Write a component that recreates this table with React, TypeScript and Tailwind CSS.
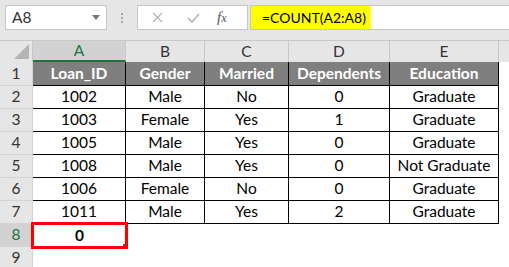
import React from "react";

type Loan = { id: string; gender: string; married: string; deps: string; edu: string };

const loans: Loan[] = [
  { id: "1002", gender: "Male", married: "No", deps: "0", edu: "Graduate" },
  { id: "1003", gender: "Female", married: "Yes", deps: "1", edu: "Graduate" },
  { id: "1005", gender: "Male", married: "Yes", deps: "0", edu: "Graduate" },
  { id: "1008", gender: "Male", married: "Yes", deps: "0", edu: "Not Graduate" },
  { id: "1006", gender: "Female", married: "No", deps: "0", edu: "Graduate" },
  { id: "1011", gender: "Male", married: "Yes", deps: "2", edu: "Graduate" },
];

const widths = ["w-[93px]", "w-[79px]", "w-[84px]", "w-[101px]", "w-[109px]"];
const letters = ["A", "B", "C", "D", "E"];

function RowNum({ n, active, h }: { n: number; active?: boolean; h: string }) {
  return (
    <div
      className={`${h} w-[33px] shrink-0 flex items-center justify-center border-r border-b border-[#d4d4d4] ${
        active ? "bg-[#d2d2d2] text-[#217346]" : "bg-[#e6e6e6] text-[#333]"
      }`}
    >
      {n}
    </div>
  );
}

export default function App() {
  return (
    <div className="w-[509px] h-[267px] overflow-hidden bg-white text-[15.5px] text-black" style={{ fontFamily: "Lato, 'Liberation Sans', sans-serif" }}>
      {/* formula bar */}
      <div className="h-[40px] bg-[#e6e6e6] flex items-start pt-[5px] pl-[5px]">
        <div className="w-[102px] h-[25px] bg-white border border-[#c6c6c6] flex items-center pl-[6px] pr-[6px] text-[#333]">
          <span className="flex-1">A8</span>
          <svg width="8" height="5" viewBox="0 0 8 5"><path d="M0 0h8L4 5z" fill="#777" /></svg>
        </div>
        <div className="w-[30px] h-[25px] flex flex-col items-center justify-center gap-[2px]">
          <span className="w-[2px] h-[2px] bg-[#a6a6a6]" />
          <span className="w-[2px] h-[2px] bg-[#a6a6a6]" />
          <span className="w-[2px] h-[2px] bg-[#a6a6a6]" />
        </div>
        <div className="w-[111px] h-[25px] bg-white border border-[#c6c6c6] flex items-center">
          <svg className="ml-[14px]" width="11" height="11" viewBox="0 0 11 11">
            <path d="M1 1l9 9M10 1l-9 9" stroke="#b5b5b5" strokeWidth="1.3" />
          </svg>
          <svg className="ml-[24px]" width="13" height="10" viewBox="0 0 13 10">
            <path d="M1 5l4 4 7-8" stroke="#b5b5b5" strokeWidth="1.6" fill="none" />
          </svg>
          <span className="ml-[17px] text-[#555] italic text-[15px]" style={{ fontFamily: "'Liberation Serif', serif" }}>
            f<span className="text-[12px]">x</span>
          </span>
        </div>
        <div className="flex-1 ml-[2px] h-[25px] bg-white border border-[#c6c6c6] border-r-0 flex items-stretch">
          <div className="w-[120px] bg-[#ffff00] flex items-center pl-[11px] text-[14px]">=COUNT(A2:A8)</div>
        </div>
      </div>

      {/* column headers */}
      <div className="flex h-[22px] border-t border-[#c8c8c8] bg-[#e6e6e6]">
        <div className="w-[33px] shrink-0 border-r border-[#c8c8c8] flex items-end justify-end pr-[3px] pb-[3px]">
          <svg width="15" height="15" viewBox="0 0 15 15"><path d="M15 0v15H0z" fill="#b4b4b4" /></svg>
        </div>
        {letters.map((l, i) => (
          <div
            key={l}
            className={`${widths[i]} shrink-0 flex items-center justify-center border-r border-[#c8c8c8] ${
              i === 0 ? "bg-[#d2d2d2] text-[#217346] border-b-2 border-b-[#217346]" : "text-[#333]"
            }`}
          >
            {l}
          </div>
        ))}
        <div className="flex-1" />
      </div>

      {/* title row */}
      <div className="flex">
        <RowNum n={1} h="h-[24px]" />
        {["Loan_ID", "Gender", "Married", "Dependents", "Education"].map((t, i) => (
          <div key={t} className={`${widths[i]} h-[24px] shrink-0 bg-[#7f7f7f] text-white font-bold flex items-center justify-center border-r border-b border-black`}>
            {t}
          </div>
        ))}
      </div>

      {loans.map((r, k) => (
        <div key={r.id} className="flex">
          <RowNum n={k + 2} h="h-[23px]" />
          {[r.id, r.gender, r.married, r.deps, r.edu].map((v, i) => (
            <div key={i} className={`${widths[i]} h-[23px] shrink-0 flex items-center justify-center border-r border-b border-black`}>
              {v}
            </div>
          ))}
        </div>
      ))}

      {/* result row */}
      <div className="flex">
        <RowNum n={8} active h="h-[23px]" />
        <div className="relative w-[93px] h-[23px] shrink-0 flex items-center justify-center font-bold">
          0
          <div className="absolute -left-[2px] -top-[2px] w-[97px] h-[27px] border-[3px] border-[#ff0000]">
            <span className="absolute right-0 bottom-0 w-[2px] h-[2px] bg-[#217346]" />
          </div>
        </div>
      </div>
      <div className="flex">
        <RowNum n={9} h="h-[23px]" />
      </div>
    </div>
  );
}
